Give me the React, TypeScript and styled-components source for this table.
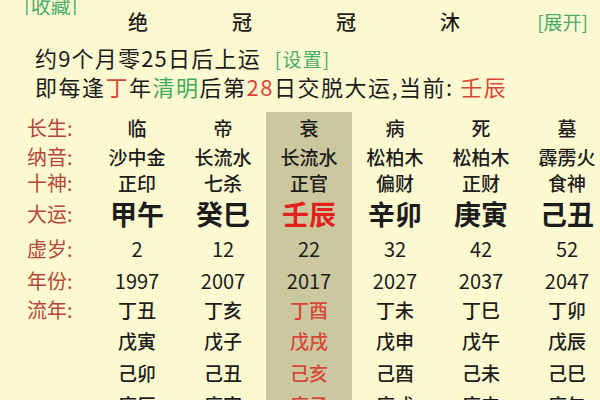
import React from "react";
import styled, { createGlobalStyle } from "styled-components";

const Global = createGlobalStyle`
  html, body {
    margin: 0;
    padding: 0;
    background: #fcf9d0;
    overflow: hidden;
  }
  body {
    font-family: "Noto Sans CJK SC", "Noto Sans", sans-serif;
    color: #1c1c1c;
  }
`;

const Page = styled.div`
  width: 600px;
  height: 400px;
  overflow: hidden;
  background: #fcf9d0;
`;

const TopRow = styled.div`
  height: 15px;
  display: flex;
  align-items: flex-end;
  overflow: hidden;
  padding-left: 24px;
`;

const Link = styled.span<{ $size?: number }>`
  color: #4aab6c;
  font-size: ${(p) => p.$size ?? 18}px;
  line-height: 18px;
  white-space: nowrap;
`;

const PillarRow = styled.div`
  height: 14px;
  display: flex;
  align-items: center;
  padding-left: 86px;
  padding-right: 12px;
`;

const PillarCell = styled.div`
  width: 104px;
  text-align: center;
  font-size: 20px;
  font-weight: 500;
  line-height: 14px;
  color: #1c1c1c;
`;

const Expand = styled.div`
  margin-left: auto;
  line-height: 14px;
  display: flex;
`;

const Info = styled.div`
  padding: 14px 0 0 35px;
`;

const InfoLine = styled.div<{ $spacing: number }>`
  height: 29px;
  line-height: 29px;
  font-size: 22px;
  letter-spacing: ${(p) => p.$spacing}px;
  white-space: nowrap;
  color: #1c1c1c;
`;

const Mark = styled.span<{ $tone: "red" | "green" }>`
  color: ${(p) => (p.$tone === "red" ? "#d8463a" : "#3fa95e")};
`;

const Gap = styled.span`
  display: inline-block;
  width: 14px;
`;

const Table = styled.div`
  margin-top: 11px;
  display: flex;
  padding-left: 20px;
`;

const Column = styled.div<{ $label?: boolean; $current?: boolean }>`
  width: ${(p) => (p.$label ? 74 : 86)}px;
  flex: none;
  display: flex;
  flex-direction: column;
  background: ${(p) => (p.$current ? "#cbc8a0" : "transparent")};
  padding-left: ${(p) => (p.$label ? 7 : 0)}px;
  box-sizing: border-box;
`;

type Kind = "label" | "text" | "big" | "num";

const Cell = styled.div<{ $h: number; $kind: Kind; $color?: string }>`
  height: ${(p) => p.$h}px;
  line-height: ${(p) => p.$h}px;
  white-space: nowrap;
  text-align: ${(p) => (p.$kind === "label" ? "left" : "center")};
  font-size: ${(p) =>
    p.$kind === "big" ? 27 : p.$kind === "num" ? 20 : p.$kind === "label" ? 20 : 19}px;
  font-weight: ${(p) => (p.$kind === "big" ? 700 : p.$kind === "text" ? 500 : 400)};
  color: ${(p) => p.$color ?? (p.$kind === "label" ? "#b5473a" : "#1c1c1c")};
`;

const rowHeights = [32, 26, 26, 36, 34, 30, 28, 33, 32, 32];
const labels = ["长生:", "纳音:", "十神:", "大运:", "虚岁:", "年份:", "流年:", "", "", ""];

const columns: string[][] = [
  ["临", "沙中金", "正印", "甲午", "2", "1997", "丁丑", "戊寅", "己卯", "庚辰"],
  ["帝", "长流水", "七杀", "癸巳", "12", "2007", "丁亥", "戊子", "己丑", "庚寅"],
  ["衰", "长流水", "正官", "壬辰", "22", "2017", "丁酉", "戊戌", "己亥", "庚子"],
  ["病", "松柏木", "偏财", "辛卯", "32", "2027", "丁未", "戊申", "己酉", "庚戌"],
  ["死", "松柏木", "正财", "庚寅", "42", "2037", "丁巳", "戊午", "己未", "庚申"],
  ["墓", "霹雳火", "食神", "己丑", "52", "2047", "丁卯", "戊辰", "己巳", "庚午"],
];

const kindFor = (i: number): Kind => (i === 3 ? "big" : i === 4 || i === 5 ? "num" : "text");

const colorFor = (i: number, current: boolean): string | undefined => {
  if (!current) return undefined;
  if (i === 3) return "#e2231d";
  if (i >= 6) return "#d8463a";
  return undefined;
};

export default function App() {
  return (
    <Page>
      <Global />
      <TopRow>
        <Link $size={20}>[收藏]</Link>
      </TopRow>
      <PillarRow>
        {["绝", "冠", "冠", "沐"].map((c, i) => (
          <PillarCell key={i}>{c}</PillarCell>
        ))}
        <Expand>
          <Link $size={19}>[展开]</Link>
        </Expand>
      </PillarRow>
      <Info>
        <InfoLine $spacing={1.2}>
          约9个月零25日后上运
          <Gap />
          <Link $size={19}>[设置]</Link>
        </InfoLine>
        <InfoLine $spacing={1.5}>
          即每逢<Mark $tone="red">丁</Mark>年<Mark $tone="green">清明</Mark>后第
          <Mark $tone="red">28</Mark>日交脱大运,当前: <Mark $tone="red">壬辰</Mark>
        </InfoLine>
      </Info>
      <Table>
        <Column $label>
          {labels.map((l, i) => (
            <Cell key={i} $h={rowHeights[i]} $kind="label">
              {l}
            </Cell>
          ))}
        </Column>
        {columns.map((col, ci) => {
          const current = ci === 2;
          return (
            <Column key={ci} $current={current}>
              {col.map((v, i) => (
                <Cell key={i} $h={rowHeights[i]} $kind={kindFor(i)} $color={colorFor(i, current)}>
                  {v}
                </Cell>
              ))}
            </Column>
          );
        })}
      </Table>
    </Page>
  );
}
